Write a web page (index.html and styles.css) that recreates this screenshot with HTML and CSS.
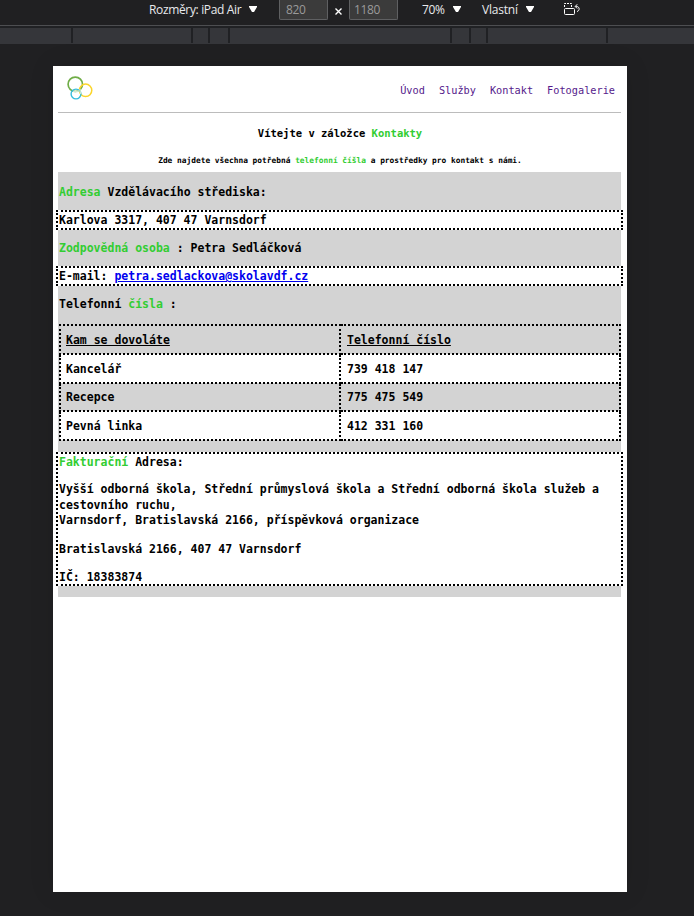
FILE: index.html
```html
<!DOCTYPE html>
<html lang="cs">
<head>
<meta charset="utf-8">
<title>Kontakty</title>
<link rel="stylesheet" href="styles.css">
</head>
<body>
<header class="toolbar">
  <span class="label device">Rozměry: iPad Air</span>
  <svg class="caret" viewBox="0 0 8 6"><path d="M0 0h8v1L5 6H3L0 1z"/></svg>
  <span class="size width">820</span>
  <svg class="times" viewBox="0 0 7 7"><path d="M.5.5l6 6M6.500.5l-6 6"/></svg>
  <span class="size height">1180</span>
  <span class="label zoom">70%</span>
  <svg class="caret" viewBox="0 0 8 6"><path d="M0 0h8v1L5 6H3L0 1z"/></svg>
  <span class="label throttle">Vlastní</span>
  <svg class="caret" viewBox="0 0 8 6"><path d="M0 0h8v1L5 6H3L0 1z"/></svg>
  <svg class="rotate" viewBox="0 0 18 13"><rect x="1.500" y="5.500" width="10" height="6" rx="1"/><path class="dash" d="M1.500 4V.5h7V5"/><path d="M12.500 3.500h1.300c3 .2 3.200 4.300.2 5M14.200 1.300l-2 2.200 2 2"/></svg>
</header>
<div class="ruler"><i class="a"></i><i class="b"></i><i class="c"></i><i class="d"></i><i class="e"></i><i class="f"></i><i class="c"></i><i class="b"></i><i class="g"></i></div>
<main class="page">
  <div class="top">
    <svg class="logo" viewBox="0 0 26 25"><circle cx="8.300" cy="8.300" r="7.200" stroke="#70ad47" stroke-width="1.700"/><circle cx="18.600" cy="14.300" r="6.200" stroke="#fbd52b" stroke-width="1.500"/><circle cx="9" cy="18" r="4.900" stroke="#35bddc" stroke-width="1.400"/><path d="M6 15.400q3 .8 6-.6M13 13q0 3 .8 5" stroke="#cfe8cf" stroke-width="1.300"/></svg>
    <nav><a href="#">Úvod</a><a href="#">Služby</a><a href="#">Kontakt</a><a href="#">Fotogalerie</a></nav>
  </div>
  <h1>Vítejte v záložce <em>Kontakty</em></h1>
  <h2>Zde najdete všechna potřebná <em>telefonní číšla</em> a prostředky pro kontakt s námi.</h2>
  <section class="contacts">
    <p class="caption"><em>Adresa</em> Vzdělávacího střediska:</p>
    <p class="box">Karlova 3317, 407 47 Varnsdorf</p>
    <p class="caption middle"><em>Zodpovědná osoba</em> : Petra Sedláčková</p>
    <p class="box">E-mail: <a href="mailto:petra.sedlackova@skolavdf.cz">petra.sedlackova@skolavdf.cz</a></p>
    <p class="caption phones">Telefonní <em>čísla</em> :</p>
    <table>
      <tr><th>Kam se dovoláte</th><th>Telefonní číslo</th></tr>
      <tr class="light"><td>Kancelář</td><td>739 418 147</td></tr>
      <tr class="short"><td>Recepce</td><td>775 475 549</td></tr>
      <tr class="light"><td>Pevná linka</td><td>412 331 160</td></tr>
    </table>
    <div class="box billing">
      <p><em>Fakturační</em> Adresa:</p>
      <p class="school">Vyšší odborná škola, Střední průmyslová škola a Střední odborná škola služeb a<br>cestovního ruchu,<br>Varnsdorf, Bratislavská 2166, příspěvková organizace</p>
      <p>Bratislavská 2166, 407 47 Varnsdorf</p>
      <p>IČ: 18383874</p>
    </div>
  </section>
</main>
</body>
</html>
```
FILE: styles.css
```css
* { box-sizing: border-box; }
body { margin: 0; height: 916px; background: #202022; overflow: hidden; }
p, h1, h2 { margin: 0; white-space: nowrap; }
em { font-style: normal; color: #32cd32; }

.toolbar { display: flex; height: 26px; padding-left: 149px; border-bottom: 1px solid #4d4e51; font: 12px/20px "Open Sans", sans-serif; color: #e8eaed; }
.label { height: 20px; white-space: nowrap; }
.device { width: 92px; letter-spacing: -.35px; }
.zoom { width: 23px; margin-left: 24px; letter-spacing: -.3px; }
.throttle { width: 36px; margin-left: 21px; letter-spacing: -.2px; }
.caret { width: 8px; height: 6px; margin: 6px 0 0 8px; fill: #fff; }
.size { width: 49px; height: 20px; padding-left: 6px; border: 1px solid #5f6062; border-top: 0; border-radius: 0 0 2px 2px; background: #3b3b3b; color: #9a9a9a; letter-spacing: -.35px; }
.width { margin-left: 22px; }
.height { padding-left: 4px; }
.times { width: 7px; height: 7px; margin: 8px 7px 0 7px; fill: none; stroke: #fff; stroke-width: 1.4; }
.rotate { width: 18px; height: 13px; margin: 3px 0 0 29px; fill: none; stroke: #fff; stroke-width: 1; }
.dash { stroke-dasharray: 2 1; }

.ruler { display: flex; gap: 2px; height: 18px; padding-top: 2px; background: linear-gradient(#202124 2px, #202124 17px, #35363a 17px); }
.ruler i { flex: none; background: #35363a; }
.a { width: 71px; } .b { width: 118px; } .c { width: 15px; } .d { width: 18px; }
.e { width: 220px; } .f { width: 17px; } .g { width: 86px; }

.page { width: 574px; height: 826px; margin: 22px 0 0 53px; padding: 0 6px 0 5px; background: #fff; box-shadow: 0 0 24px rgba(0, 0, 0, .1); font: bold 11.5px/16px "DejaVu Sans Mono", monospace; color: #000; }
.top { display: flex; justify-content: space-between; height: 47px; border-bottom: 1px solid #bcbcbc; }
.logo { width: 26px; height: 25px; margin: 10px 0 0 9px; fill: none; }
nav { display: flex; gap: 14px; padding: 16px 6px 0 0; font-size: 10.25px; font-weight: normal; }
nav a { color: #551a8b; text-decoration: none; }
h1 { margin-top: 12px; padding-left: 1px; text-align: center; font-size: 10.5px; line-height: 16px; }
h2 { margin-top: 14px; padding-left: 1px; text-align: center; font-size: 7.85px; line-height: 12px; }

.contacts { height: 425px; margin-top: 5px; background: #d3d3d3; }
.caption { padding: 12px 0 10px 1px; height: 38px; }
.middle { height: 36px; padding-top: 10px; }
.phones { height: 38px; padding-top: 10px; }
.box { height: 20px; margin: 0 -2px; padding-left: 1px; border: 2px dotted #000; background: #fff; }
.box a { color: #00e; }
table { width: 562px; margin-left: 1px; border-collapse: collapse; table-layout: fixed; }
tr { height: 29px; }
.short { height: 28px; }
.light { background: #fff; }
th, td { padding: 0 0 0 6px; border: 2px dotted #000; text-align: left; }
th:first-child, td:first-child { padding-left: 5px; }
th { text-decoration: underline; }
.billing { height: 134px; margin-top: 11px; }
.billing p { margin-bottom: 12px; line-height: 16px; }
.billing .school { line-height: 15.6px; }
```
